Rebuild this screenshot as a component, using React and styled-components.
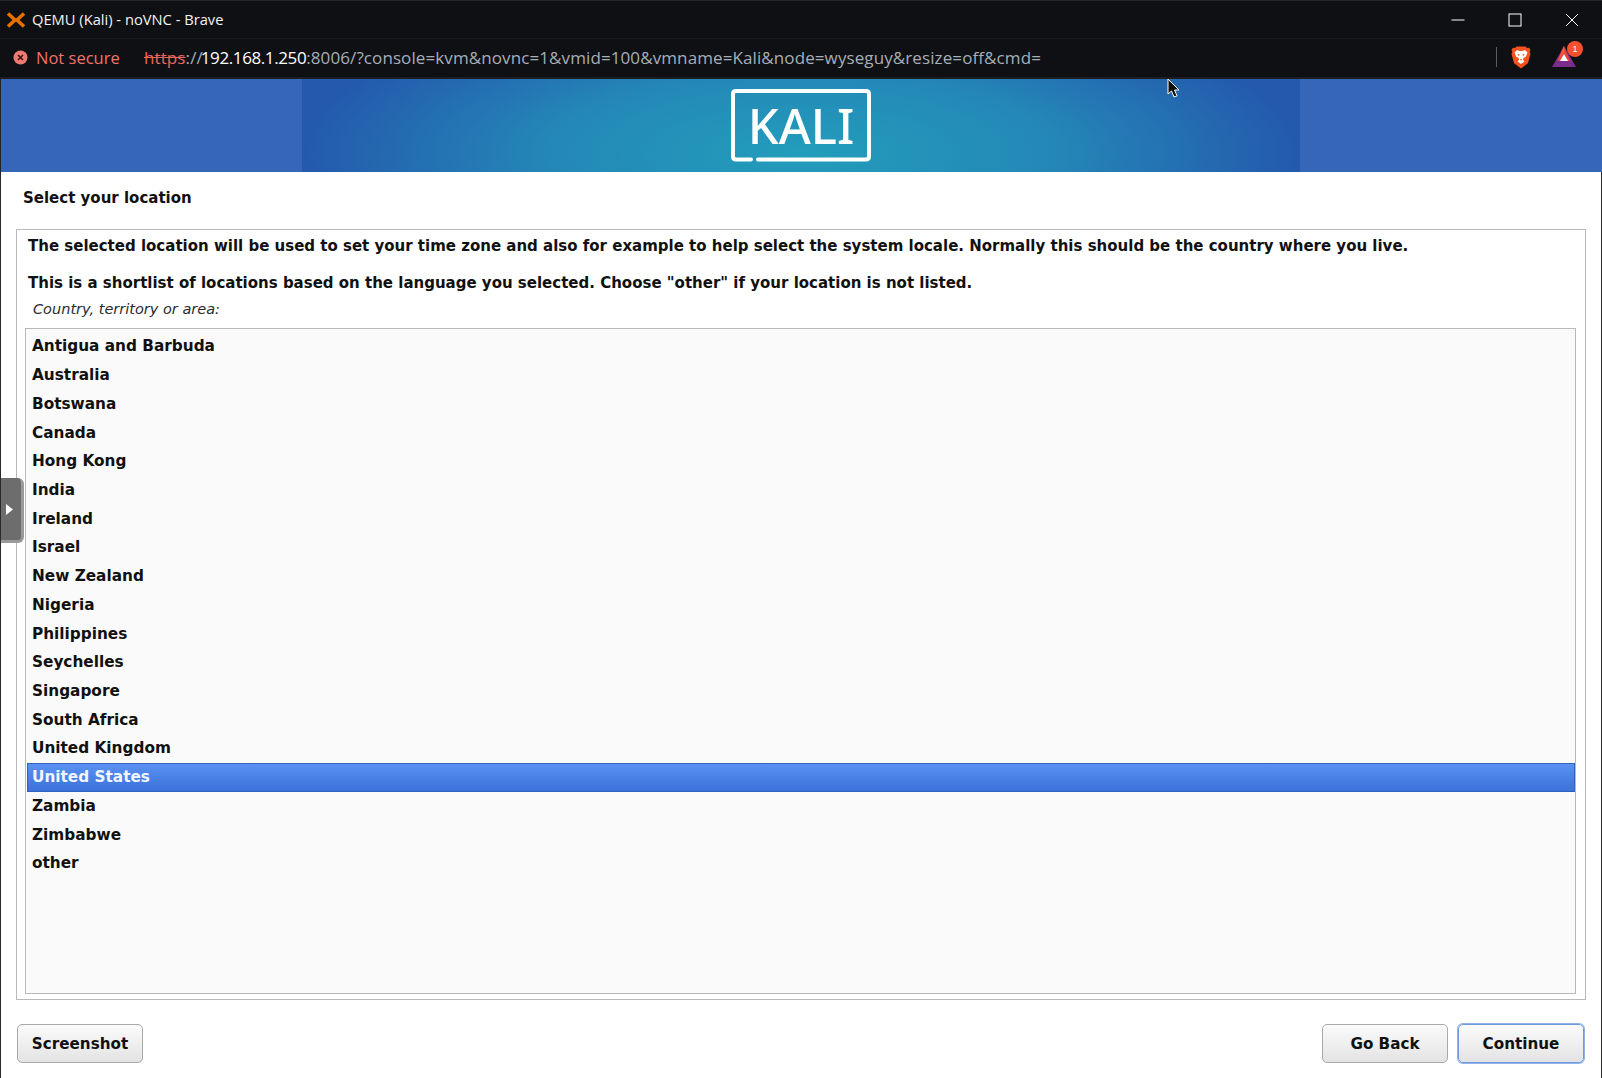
import React from "react";
import styled, { createGlobalStyle } from "styled-components";

const GlobalStyle = createGlobalStyle`
  html, body {
    margin: 0;
    padding: 0;
    background: #ffffff;
    overflow: hidden;
  }
  * {
    box-sizing: border-box;
  }
`;

const Window = styled.div`
  position: relative;
  display: flex;
  flex-direction: column;
  width: 1602px;
  height: 1078px;
  background: #ffffff;
  overflow: hidden;
`;

const TitleBar = styled.div`
  display: flex;
  align-items: center;
  height: 38px;
  flex: none;
  padding: 0 2px 0 5px;
  background: #0f1014;
  border-top: 1px solid #26272b;
  color: #f2f2f2;
  font: 400 14.7px "Open Sans", sans-serif;
`;

const TitleText = styled.span`
  margin: 0 0 2px 5px;
  flex: 1;
`;

const WindowButton = styled.div`
  display: flex;
  align-items: center;
  justify-content: center;
  width: 57px;
  height: 100%;
`;

const AddressBar = styled.div`
  display: flex;
  align-items: center;
  height: 41px;
  flex: none;
  padding: 0 0 2px 13px;
  background: #0f1014;
  border-top: 1px solid #17181c;
  border-bottom: 2px solid #1c1d20;
  font: 400 16.5px "Open Sans", sans-serif;
`;

const NotSecure = styled.span`
  margin-left: 8px;
  width: 108px;
  color: #f0736a;
`;

const Url = styled.span`
  flex: 1;
  color: #a6aeb8;
  font-size: 17px;
  letter-spacing: 0.1px;
  white-space: nowrap;
`;

const Scheme = styled.span`
  color: #e8665c;
  text-decoration: line-through;
`;

const Host = styled.span`
  margin-left: -2px;
  color: #ffffff;
  letter-spacing: -0.4px;
`;

const Divider = styled.div`
  width: 1px;
  height: 20px;
  margin-right: 14px;
  background: #5b5d61;
`;

const Extensions = styled.div`
  display: flex;
  align-items: center;
  gap: 21px;
  padding-right: 26px;
`;

const BatWrap = styled.div`
  position: relative;
  width: 24px;
  height: 22px;
`;

const Badge = styled.span`
  position: absolute;
  top: -5px;
  right: -7px;
  width: 16px;
  height: 16px;
  border-radius: 50%;
  background: #f5502f;
  color: #ffffff;
  font: 400 9px/16px "Liberation Sans", sans-serif;
  text-align: center;
`;

const Banner = styled.div`
  display: flex;
  justify-content: center;
  height: 93px;
  flex: none;
  padding-right: 1px;
  background: #3566b8;
  border-left: 1px solid #23242a;
`;

const BannerArt = styled.div`
  display: flex;
  align-items: center;
  justify-content: center;
  width: 998px;
  background: radial-gradient(
    ellipse 50% 170% at 50% 80%,
    #229dbb 0%,
    #2488b7 50%,
    #2459ad 100%
  );
`;

const Installer = styled.div`
  flex: 1;
  display: flex;
  flex-direction: column;
  border-left: 1px solid #2a2a2a;
  border-right: 1px solid #2a2a2a;
  padding: 0 15px 0 15px;
  min-height: 0;
  font-family: "DejaVu Sans", sans-serif;
  color: #111111;
`;

const Heading = styled.h1`
  margin: 17px 0 21px 7px;
  font-size: 15px;
  line-height: 19px;
  font-weight: 700;
`;

const Panel = styled.div`
  display: flex;
  flex-direction: column;
  height: 771px;
  flex: none;
  padding: 7px 9px 5px 8px;
  border: 1px solid #b9b9b9;
`;

const Message = styled.p`
  margin: 0 0 ${(props) => props.$gap}px 3px;
  font-size: 15px;
  line-height: 19px;
  font-weight: 700;
  white-space: nowrap;
`;

const FieldLabel = styled.div`
  margin: 0 0 10px 8px;
  padding-top: 1px;
  font-size: 14.5px;
  line-height: 18px;
  font-style: italic;
  color: #2c2c2c;
`;

const List = styled.ul`
  flex: 1;
  margin: 0;
  padding: 3px 0 0 1px;
  list-style: none;
  background: #fafafa;
  border: 1px solid #b9b9b9;
`;

const Row = styled.li`
  display: flex;
  align-items: center;
  height: 28.73px;
  padding-left: 5px;
  font-size: 15.3px;
  font-weight: 700;
  color: ${(props) => (props.$selected ? "#f2f6ff" : "#111111")};
  background: ${(props) =>
    props.$selected
      ? "linear-gradient(180deg, #5a93f4 0%, #3b70d8 100%)"
      : "transparent"};
  box-shadow: ${(props) =>
    props.$selected ? "inset 0 0 0 1px #2f62c0" : "none"};
`;

const Footer = styled.div`
  display: flex;
  align-items: center;
  justify-content: space-between;
  padding: 24px 2px 0 1px;
`;

const ButtonGroup = styled.div`
  display: flex;
  gap: 10px;
`;

const Button = styled.button`
  width: 126px;
  height: 39px;
  padding: 0;
  border: 1px solid ${(props) => (props.$focused ? "#6f9bde" : "#a9a9a9")};
  border-radius: 5px;
  background: linear-gradient(180deg, #fbfbfb 0%, #e3e3e3 100%);
  box-shadow: ${(props) => (props.$focused ? "0 0 0 1px #8fb2e8" : "none")};
  color: #111111;
  font: 700 15.2px "DejaVu Sans", sans-serif;
`;

const SideHandle = styled.div`
  position: absolute;
  left: 1px;
  top: 478px;
  display: flex;
  align-items: center;
  justify-content: center;
  width: 23px;
  height: 65px;
  padding-right: 4px;
  background: #6d6d6d;
  border-right: 3px solid #9a9a9a;
  border-bottom: 3px solid #9a9a9a;
  border-radius: 0 6px 6px 0;
`;

const Cursor = styled.svg`
  position: absolute;
  left: 1167px;
  top: 78px;
`;

const ProxmoxLogo = () => (
  <svg width="22" height="16" viewBox="0 0 22 16">
    <path
      d="M3 1.500l7 6.500-7 6.500M19 1.500L12 8l7 6.500"
      fill="none"
      stroke="#e57000"
      strokeWidth="3.600"
    />
  </svg>
);

const MinimizeIcon = () => (
  <svg width="14" height="14" viewBox="0 0 14 14">
    <path d="M0.5 7h13" stroke="#fff" strokeWidth="1" />
  </svg>
);

const MaximizeIcon = () => (
  <svg width="14" height="14" viewBox="0 0 14 14">
    <rect x="1" y="1" width="12" height="12" fill="none" stroke="#fff" />
  </svg>
);

const CloseIcon = () => (
  <svg width="14" height="14" viewBox="0 0 14 14">
    <path d="M1 1l12 12M13 1L1 13" stroke="#fff" strokeWidth="1" />
  </svg>
);

const WarningIcon = () => (
  <svg width="15" height="15" viewBox="0 0 15 15">
    <circle cx="7.5" cy="7.5" r="7" fill="#ee7b72" />
    <path d="M5 5l5 5M10 5l-5 5" stroke="#3a1512" strokeWidth="1.6" />
  </svg>
);

const BraveIcon = () => (
  <svg width="20" height="23" viewBox="0 0 20 23">
    <path
      d="M5.500 0.500h9l1.500 1.600 2-.3 1.500 2-.7 2 .7 2.200-2.600 9.200-6.900 5.300-6.900-5.300L.5 8l.7-2.200-.7-2 1.500-2 2 .3z"
      fill="#f4511e"
    />
    <path
      d="M6 4l2.500 1h3L14 4l2.500 2.500-1.800 4.500-2.200.7-.5 2.300 1.500 1.500L10 18l-3.500-2.500L8 14l-.5-2.300-2.200-.7-1.800-4.500z"
      fill="#ffffff"
    />
    <path d="M6.500 8l2.500.7-1.800 1.300zM13.500 8l-2.500.7 1.800 1.300z" fill="#f4511e" />
    <path d="M8.600 13.200h2.800L10 14.800z" fill="#f4511e" />
  </svg>
);

const BatIcon = () => (
  <svg width="24" height="22" viewBox="0 0 24 22">
    <path d="M12 0l12 21H0z" fill="#7b2d8e" />
    <path d="M12 0L5.500 15h13z" fill="#e8423f" />
    <path d="M12 0L5.500 15 12 6z" fill="#f2622e" />
    <path d="M12 8l4 7H8z" fill="#ffffff" />
  </svg>
);

const KaliLogo = () => (
  <svg width="140" height="73" viewBox="0 0 140 73">
    <path
      d="M20 70.500H5q-3 0-3-3V5q0-3 3-3h130q3 0 3 3v62.500q0 3-3 3H27"
      fill="none"
      stroke="#ffffff"
      strokeWidth="4"
      strokeLinecap="round"
    />
    <text
      x="70"
      y="55"
      textAnchor="middle"
      fontFamily="'Noto Sans', sans-serif"
      fontSize="49"
      fontWeight="500"
      fill="#ffffff"
    >
      KALI
    </text>
  </svg>
);

const locations = [
  "Antigua and Barbuda",
  "Australia",
  "Botswana",
  "Canada",
  "Hong Kong",
  "India",
  "Ireland",
  "Israel",
  "New Zealand",
  "Nigeria",
  "Philippines",
  "Seychelles",
  "Singapore",
  "South Africa",
  "United Kingdom",
  "United States",
  "Zambia",
  "Zimbabwe",
  "other",
];

const App = () => {
  return (
    <Window>
      <GlobalStyle />
      <TitleBar>
        <ProxmoxLogo />
        <TitleText>QEMU (Kali) - noVNC - Brave</TitleText>
        <WindowButton>
          <MinimizeIcon />
        </WindowButton>
        <WindowButton>
          <MaximizeIcon />
        </WindowButton>
        <WindowButton>
          <CloseIcon />
        </WindowButton>
      </TitleBar>
      <AddressBar>
        <WarningIcon />
        <NotSecure>Not secure</NotSecure>
        <Url>
          <Scheme>https</Scheme>://<Host>192.168.1.250</Host>
          :8006/?console=kvm&novnc=1&vmid=100&vmname=Kali&node=wyseguy&resize=off&cmd=
        </Url>
        <Divider />
        <Extensions>
          <BraveIcon />
          <BatWrap>
            <BatIcon />
            <Badge>1</Badge>
          </BatWrap>
        </Extensions>
      </AddressBar>
      <Banner>
        <BannerArt>
          <KaliLogo />
        </BannerArt>
      </Banner>
      <Installer>
        <Heading>Select your location</Heading>
        <Panel>
          <Message $gap={18}>
            The selected location will be used to set your time zone and also
            for example to help select the system locale. Normally this should
            be the country where you live.
          </Message>
          <Message $gap={6}>
            This is a shortlist of locations based on the language you selected.
            Choose "other" if your location is not listed.
          </Message>
          <FieldLabel>Country, territory or area:</FieldLabel>
          <List>
            {locations.map((name) => (
              <Row key={name} $selected={name === "United States"}>
                {name}
              </Row>
            ))}
          </List>
        </Panel>
        <Footer>
          <Button>Screenshot</Button>
          <ButtonGroup>
            <Button>Go Back</Button>
            <Button $focused>Continue</Button>
          </ButtonGroup>
        </Footer>
      </Installer>
      <SideHandle>
        <svg width="7" height="11" viewBox="0 0 7 11">
          <path d="M0 0l7 5.500L0 11z" fill="#ffffff" />
        </svg>
      </SideHandle>
      <Cursor width="14" height="22" viewBox="0 0 14 22">
        <path
          d="M1 1v15l3.500-3 2.500 6 3-1.200-2.500-5.800H12z"
          fill="#111111"
          stroke="#ffffff"
          strokeWidth="1"
        />
      </Cursor>
    </Window>
  );
};

export default App;
